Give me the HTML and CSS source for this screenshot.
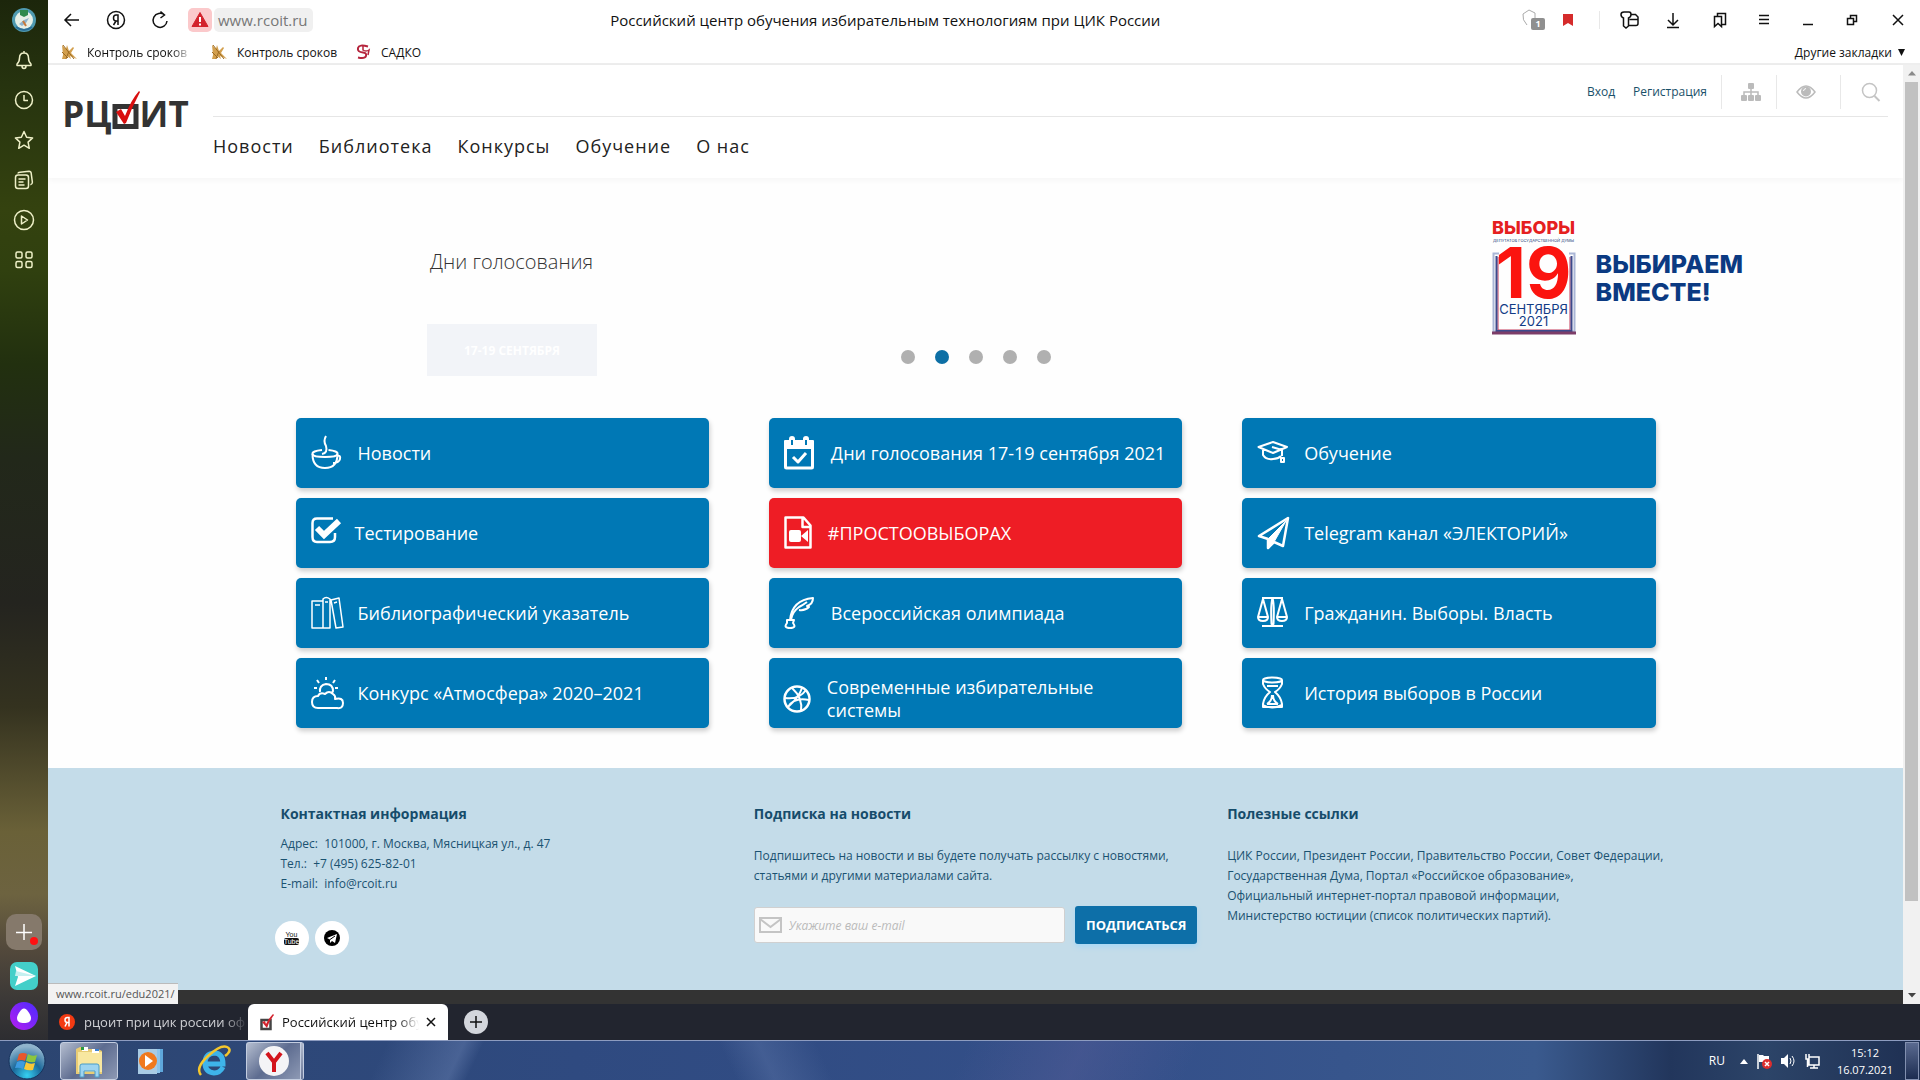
FILE: index.html
```html
<!DOCTYPE html>
<html lang="ru">
<head>
<meta charset="utf-8">
<title>Российский центр обучения избирательным технологиям при ЦИК России</title>
<link rel="stylesheet" href="styles.css">
</head>
<body>
<div class="desktop">
  <div class="browser">
    <aside class="sidebar">
      <div class="side-group">
        <button class="side-btn" aria-label="Профиль"><svg width="26" height="26" viewBox="0 0 26 26"><circle cx="13" cy="13" r="12" fill="#4f9ab0"/><circle cx="13" cy="13" r="9" fill="#e6efe6"/><path d="M9 3h8v5l-4 2-4-2z" fill="#2f8a4c"/><path d="M8 17l5-4 5-2-3 5-4 3z" fill="#8fb4cc"/><path d="M12 14l3 5" stroke="#c77a3a" stroke-width="2"/><path d="M5 20q8 6 16 0" stroke="#2b6f97" stroke-width="2" fill="none"/></svg></button>
        <button class="side-btn" aria-label="Уведомления"><svg class="side-icon" width="20" height="20" viewBox="0 0 20 20"><path d="M3 15.500V14q2.500-2 2.500-6 0-5 4.500-5t4.500 5q0 4 2.500 6v1.500zM8 16q0 2.500 2 2.500t2-2.500M10 3V1"/></svg></button>
        <button class="side-btn" aria-label="История"><svg class="side-icon" width="20" height="20" viewBox="0 0 20 20"><circle cx="10" cy="10" r="8.500"/><path d="M10 5v5.500h4"/></svg></button>
        <button class="side-btn" aria-label="Избранное"><svg class="side-icon" width="20" height="20" viewBox="0 0 20 20"><path d="M10 1.500l2.600 5.700 6 .7-4.500 4.200 1.200 6.200-5.300-3.100-5.300 3.100 1.200-6.200L1.400 7.900l6-.7z"/></svg></button>
        <button class="side-btn" aria-label="Коллекции"><svg class="side-icon" width="20" height="20" viewBox="0 0 20 20"><rect x="1.500" y="5" width="13" height="13.500" rx="2.500"/><path d="M4 3.500q0-1 2-1.200l9-1q2 0 2.200 2l1.200 9q0 2-2 2.500M4.500 9h7M4.500 12h5M4.500 15h6"/></svg></button>
        <button class="side-btn" aria-label="Видео"><svg class="side-icon" width="22" height="22" viewBox="0 0 22 22"><circle cx="11" cy="11" r="9.500"/><path d="M8.500 7v8l6-4z"/></svg></button>
        <button class="side-btn" aria-label="Сервисы"><svg class="side-icon" width="20" height="20" viewBox="0 0 20 20"><rect x="2" y="2" width="6" height="6" rx="1.500"/><rect x="12" y="2" width="6" height="6" rx="1.500"/><rect x="2" y="11.500" width="6" height="6" rx="1.500"/><rect x="12" y="11.500" width="6" height="6" rx="1.500"/></svg></button>
      </div>
      <div class="side-group side-bottom">
        <button class="side-btn side-add" aria-label="Добавить"><svg width="36" height="36" viewBox="0 0 36 36"><path d="M10 18.500h16M18 10v16" stroke="#fff" stroke-width="1.500"/><circle cx="28" cy="27" r="4" fill="#f11"/></svg></button>
        <button class="side-btn" aria-label="Мессенджер"><svg width="28" height="28" viewBox="0 0 28 28"><rect width="28" height="28" rx="7" fill="#43cfc9"/><path d="M5 4l21 10L5 24l3-9z" fill="#fff"/><path d="M5 14h21L6 9z" fill="#c4f0f0"/></svg></button>
        <button class="side-btn" aria-label="Алиса"><svg width="28" height="28" viewBox="0 0 28 28"><defs><linearGradient id="alice" x1="0" y1="1" x2="1" y2="0"><stop offset="0" stop-color="#b61df0"/><stop offset="1" stop-color="#4a2cff"/></linearGradient></defs><circle cx="14" cy="14" r="14" fill="url(#alice)"/><path d="M14 6.500c3 0 7 6.500 7 9.500 0 4-3 5-7 5s-7-1-7-5c0-3 4-9.500 7-9.500z" fill="#fff"/></svg></button>
      </div>
    </aside>

    <div class="window">
      <div class="toolbar">
        <div class="nav-tools">
          <button class="tool" aria-label="Назад"><svg class="ink" width="20" height="20" viewBox="0 0 20 20"><path d="M17 10H3M9 4l-6 6 6 6"/></svg></button>
          <button class="tool" aria-label="Яндекс"><svg class="ink" width="20" height="20" viewBox="0 0 20 20"><circle cx="10" cy="10" r="8.500"/><path d="M12 15V5h-2q-2.500 0-2.500 3T10 11h2M10 11l-2.500 4"/></svg></button>
          <button class="tool" aria-label="Обновить"><svg class="ink" width="20" height="20" viewBox="0 0 20 20"><path d="M14.500 5A7 7 0 1 0 17 11M10.500 1.500L14.500 5l-4 3"/></svg></button>
          <span class="warning"><svg width="18" height="18" viewBox="0 0 18 18"><path d="M9 1.500l8 14H1z" fill="#d3222c" stroke="#d3222c" stroke-linejoin="round"/><path d="M9 6v5M9 12.500v2" stroke="#fff" stroke-width="2"/></svg></span>
          <a class="address" href="#">www.rcoit.ru</a>
        </div>
        <div class="window-title">Российский центр обучения избирательным технологиям при ЦИК России</div>
        <div class="window-tools">
          <button class="tool-small tool-shield" aria-label="Защита"><svg width="24" height="24" viewBox="0 0 24 24"><path d="M5 17Q0 12 1 6l6-4 6 3v5" fill="none" stroke="#aaa"/></svg><span class="tool-count">1</span></button>
          <button class="tool-small" aria-label="Закладка"><svg width="12" height="16" viewBox="0 0 12 16"><path d="M1 2h10v12l-5-3-5 3z" fill="#d52b2b"/></svg></button>
          <span class="tool-divider"></span>
          <button class="tool" aria-label="Пароли"><svg class="ink" width="20" height="20" viewBox="0 0 20 20"><path d="M1.500 8Q-1 7-1 4.500T2 2h5Q9 2 9 4.500T6.500 8v8L4 18l-2.500-2zM9 4.500h4.500L16 7v6.500q0 2-2 2H7M7.500 9.500H16"/></svg></button>
          <button class="tool" aria-label="Загрузки"><svg class="ink" width="20" height="20" viewBox="0 0 20 20"><path d="M7 3v12M2 10l5 5 5-5M1 17.500h12"/></svg></button>
          <button class="tool" aria-label="Закладки"><svg class="ink" width="20" height="20" viewBox="0 0 20 20"><path d="M4.500 6.500h7v10l-3.500-3-3.500 3zM7.500 6.500v-3h8v11h-3.500"/></svg></button>
          <button class="tool" aria-label="Меню"><svg class="ink" width="20" height="20" viewBox="0 0 20 20"><path d="M5 5.500h10M5 9.500h10M5 13.500h10"/></svg></button>
          <button class="tool" aria-label="Свернуть"><svg class="ink" width="20" height="20" viewBox="0 0 20 20"><path d="M5 14.500h10"/></svg></button>
          <button class="tool" aria-label="Восстановить"><svg class="ink" width="20" height="20" viewBox="0 0 20 20"><path d="M5.500 8.500h6v6h-6zM8.500 8.500v-3h6v6h-3"/></svg></button>
          <button class="tool tool-close" aria-label="Закрыть"><svg class="ink" width="20" height="20" viewBox="0 0 20 20"><path d="M5 5l10 10M15 5L5 15"/></svg></button>
        </div>
      </div>

      <nav class="bookmarks">
        <a class="bookmark" href="#"><svg width="16" height="16" viewBox="0 0 16 16"><path d="M1 1l4 4 1-4 2 6 4-4 1 1-3 5 6 6-7-3 1 3-4-3-1 3H1l1-4z" fill="#d3a04e"/><path d="M2 1l11 14M1 8l6 6M8 7l-3 8" fill="none" stroke="#9c6a22"/></svg><span class="bookmark-cut">Контроль сроков</span></a>
        <a class="bookmark" href="#"><svg width="16" height="16" viewBox="0 0 16 16"><path d="M1 1l4 4 1-4 2 6 4-4 1 1-3 5 6 6-7-3 1 3-4-3-1 3H1l1-4z" fill="#d3a04e"/><path d="M2 1l11 14M1 8l6 6M8 7l-3 8" fill="none" stroke="#9c6a22"/></svg><span>Контроль сроков</span></a>
        <a class="bookmark" href="#"><svg width="16" height="16" viewBox="0 0 16 16"><path d="M13 2.500Q4 0 3 4t5 4.500q4 .5 3 3.500T3 13.500" fill="none" stroke="#b5243c" stroke-width="2"/><path d="M8 2v4q3 2 6 0l-1 5" fill="none" stroke="#b5243c" stroke-width="1.500"/></svg><span>САДКО</span></a>
        <button class="other-bookmarks">Другие закладки <svg width="7" height="7" viewBox="0 0 7 7"><path d="M0 0h7L3.500 7z" fill="#111"/></svg></button>
      </nav>

      <div class="viewport">
        <div class="page">
          <header class="site-header">
            <a class="logo" href="#"><span>РЦ</span><svg width="28" height="48" viewBox="0 0 28 48"><path d="M3 16.500h21v20H3z" fill="none" stroke="#333" stroke-width="5"/><path d="M4 22l5-3 4 7Q19 10 27 1l1 1Q20 17 14 33l-2 1z" fill="#d90f0f"/></svg><span>ИТ</span></a>
            <div class="header-main">
              <div class="header-top">
                <a class="auth-link" href="#">Вход</a>
                <a class="auth-link" href="#">Регистрация</a>
                <button class="header-btn header-map" aria-label="Карта сайта"><svg width="20" height="20" viewBox="0 0 20 20" fill="#bbb"><rect x="7" y="1" width="6" height="6" rx="1"/><rect x="0" y="13" width="6" height="6" rx="1"/><rect x="7" y="13" width="6" height="6" rx="1"/><rect x="14" y="13" width="6" height="6" rx="1"/><path d="M3 13v-3h14v3M10 7v6" fill="none" stroke="#bbb" stroke-width="1.500"/></svg></button>
                <button class="header-btn header-eye" aria-label="Версия для слабовидящих"><svg width="20" height="20" viewBox="0 0 20 20"><path d="M1 10q9-12 18 0-9 12-18 0z" fill="none" stroke="#bbb" stroke-width="1.500"/><circle cx="10" cy="9.500" r="5" fill="#bbb"/><path d="M7.500 9Q7.500 7 10 6.500" fill="none" stroke="#fff"/></svg></button>
                <button class="header-btn header-search" aria-label="Поиск"><svg width="20" height="20" viewBox="0 0 20 20"><circle cx="8.500" cy="8.500" r="7" fill="none" stroke="#c4c4c4" stroke-width="1.500"/><path d="M13.500 14l5 5" stroke="#c4c4c4" stroke-width="2"/></svg></button>
              </div>
              <nav class="site-nav"><a href="#">Новости</a><a href="#">Библиотека</a><a href="#">Конкурсы</a><a href="#">Обучение</a><a href="#">О нас</a></nav>
            </div>
          </header>

          <section class="hero">
            <div class="hero-copy"><h1>Дни голосования</h1><button class="hero-btn">17-19 СЕНТЯБРЯ</button></div>
            <div class="dots">
              <button class="dot" aria-label="Слайд 1"></button><button class="dot dot-active" aria-label="Слайд 2"></button><button class="dot" aria-label="Слайд 3"></button><button class="dot" aria-label="Слайд 4"></button><button class="dot" aria-label="Слайд 5"></button>
            </div>
            <div class="campaign">
              <div class="poster">
                <strong class="poster-head">ВЫБОРЫ</strong>
                <small class="poster-sub">ДЕПУТАТОВ ГОСУДАРСТВЕННОЙ ДУМЫ</small>
                <strong class="poster-day">19</strong>
                <span class="poster-date">СЕНТЯБРЯ</span>
                <span class="poster-date">2021</span>
                <svg class="poster-frame" width="84" height="83" viewBox="0 0 84 83"><path d="M7 1.500H1.500v78h81v-78H77" fill="none" stroke="#aab6d6" stroke-width="2"/><path d="M6 5v73h72V5" fill="none" stroke="#c43a5a"/><path d="M4.500 4v75h75V4" fill="none" stroke="#3c4a8c" stroke-width="2"/><path d="M0 81h84" stroke="#7c3d68" stroke-width="3"/></svg>
              </div>
              <p class="slogan">ВЫБИРАЕМ<br>ВМЕСТЕ!</p>
            </div>
          </section>

          <main class="tiles">
            <a class="tile" href="#"><svg class="glyph" width="34" height="34" viewBox="0 0 34 34"><path d="M11 14Q1 15 1.500 18t12.500 3 12.500-3-9-4"/><path d="M1.500 18q0 14 12.500 14t12.500-14M26 20q4-1 3 3t-7 4M11 18q6-1 4-8-3-5 0-10"/></svg><span>Новости</span></a>
            <a class="tile" href="#"><svg class="glyph" width="34" height="34" viewBox="0 0 34 34"><rect x="1.500" y="6" width="27" height="26" rx="1" stroke-width="3"/><path d="M1 5h28v7H1z" fill="#fff"/><path d="M8 3v6M22 3v6" stroke="#fff" stroke-width="6" stroke-linecap="round"/><path d="M8 4v5M22 4v5" stroke="#0078b5" stroke-width="2"/><path d="M9 21l5 5 8-9" stroke-width="3"/></svg><span>Дни голосования 17-19 сентября 2021</span></a>
            <a class="tile" href="#"><svg class="glyph" width="34" height="34" viewBox="0 0 34 34"><path d="M1.500 11L16 6l14 5-14 6zM6 13v6q3 5 10 4 5 0 8-3M15 11l10 3v6M24 26v-4h3v4z"/></svg><span>Обучение</span></a>
            <a class="tile tile-wide-icon" href="#"><svg class="glyph" width="34" height="34" viewBox="0 0 34 34"><path d="M22 2.500H6Q1.500 2.500 1.500 7v14q0 5 4.500 5h13q5 0 5-5v-4" stroke-width="2.500"/><path d="M6 12l7 7L28 5" stroke-width="6" stroke-linejoin="miter"/></svg><span>Тестирование</span></a>
            <a class="tile tile-alert tile-wide-icon" href="#"><svg class="glyph" width="34" height="34" viewBox="0 0 34 34"><path d="M1.500 1.500h18l7 8v22h-25zM18.500 2v9H27" stroke-width="2.500"/><rect x="5" y="14" width="12" height="12" rx="2" fill="#fff" stroke="none"/><path d="M17 20l7-6v12z" fill="#fff" stroke="none"/></svg><span>#ПРОСТООВЫБОРАХ</span></a>
            <a class="tile" href="#"><svg class="glyph" width="34" height="34" viewBox="0 0 34 34"><path d="M2 20L31 2l-5 28-9-4-6 6V23z" stroke-width="2.500"/><path d="M11 23L29 5 17 26l-6 6z" fill="#fff" stroke-width="1"/></svg><span>Telegram канал «ЭЛЕКТОРИЙ»</span></a>
            <a class="tile" href="#"><svg class="glyph" width="34" height="34" viewBox="0 0 34 34"><path d="M1 5h11v27H1zM12 3q3-3 7 0v29h-7zM20 4l8-2 4 29-7 1zM4 9h5M14 6h3M23 7l3-1" stroke-width="1.500"/></svg><span>Библиографический указатель</span></a>
            <a class="tile" href="#"><svg class="glyph" width="34" height="34" viewBox="0 0 34 34"><path d="M6 24Q8 4 29 2q0 6-6 8l2 1q-4 4-10 3M7 24q1-8 8-13 4-2 8-5M3 24h7l-1 3q4 5-3 5t-3-5z"/></svg><span>Всероссийская олимпиада</span></a>
            <a class="tile" href="#"><svg class="glyph" width="34" height="34" viewBox="0 0 34 34"><path d="M5 2h21M6 3L1 21q0 4 5 4t5-4zM25 3l-5 18q0 4 5 4t5-4zM1 21h10M20 21h10M15.500 2q-2 6-1 26h2q1-20-1-26zM5 30h21"/></svg><span>Гражданин. Выборы. Власть</span></a>
            <a class="tile" href="#"><svg class="glyph" width="34" height="34" viewBox="0 0 34 34"><path d="M7 32q-6 0-6-6t6-6q2-4 7-2 4-4 8 0 3 2 2 5 8-2 8 4t-6 5zM9 16q-1-7 6-8 7 0 7 7l-1 2M15 4V1M8 7L6 4M22 7l2-3M6 12H3M27 12h-3"/></svg><span>Конкурс «Атмосфера» 2020–2021</span></a>
            <a class="tile tile-tall tile-wide-icon" href="#"><svg class="glyph" width="34" height="34" viewBox="0 0 34 34"><circle cx="14" cy="17" r="12.500" stroke-width="2.500"/><path d="M2 16q14 2 21-8M9 6q11 10 9 23M5 25q6-10 21-7M19 6q-3 9-13 18" stroke-width="2"/></svg><span>Современные избирательные системы</span></a>
            <a class="tile" href="#"><svg class="glyph" width="34" height="34" viewBox="0 0 34 34"><ellipse cx="15.500" cy="4" rx="9.500" ry="2.500"/><path d="M6 4v4q2 5 7 8-6 5-7 12v3h19v-3q-1-7-7-12 5-3 7-8V4M6 29q9 5 19 0M10 28q5-3 5-9M21 28q-5-3-5-9M10 28h11M10 10h11"/></svg><span>История выборов в России</span></a>
          </main>

          <footer class="site-footer">
            <section class="footer-col">
              <h2>Контактная информация</h2>
              <address>Адрес:&nbsp; 101000, г. Москва, Мясницкая ул., д. 47<br>Тел.:&nbsp; +7 (495) 625-82-01<br>E-mail:&nbsp; <a href="#">info@rcoit.ru</a></address>
              <div class="social">
                <a class="social-link" href="#" aria-label="YouTube"><span class="yt">You</span><span class="yt yt-tube">Tube</span></a>
                <a class="social-link" href="#" aria-label="Telegram"><svg width="16" height="16" viewBox="0 0 16 16"><circle cx="8" cy="8" r="8" fill="#000"/><path d="M3 8l10-4-2 9-3-2-2 2V9.500z" fill="#fff"/><path d="M6 9.500L11 6" stroke="#000"/></svg></a>
              </div>
            </section>
            <section class="footer-col">
              <h2>Подписка на новости</h2>
              <p>Подпишитесь на новости и вы будете получать рассылку с новостями, статьями и другими материалами сайта.</p>
              <form class="subscribe">
                <label class="email-box"><svg width="24" height="18" viewBox="0 0 24 18"><path d="M1 2h21v14H1zM1 3l10.500 8L22 3" fill="none" stroke="#c4c4c4" stroke-width="2"/></svg><input type="email" placeholder="Укажите ваш e-mail" aria-label="Укажите ваш e-mail"></label>
                <button class="subscribe-btn" type="button">ПОДПИСАТЬСЯ</button>
              </form>
            </section>
            <section class="footer-col">
              <h2>Полезные ссылки</h2>
              <p><a href="#">ЦИК России</a>, <a href="#">Президент России</a>, <a href="#">Правительство России</a>, <a href="#">Совет Федерации</a>, <a href="#">Государственная Дума</a>, <a href="#">Портал «Российское образование»</a>,<br><a href="#">Официальный интернет-портал правовой информации</a>,<br><a href="#">Министерство юстиции (список политических партий)</a>.</p>
            </section>
          </footer>
          <div class="footer-strip"></div>
        </div>
        <div class="scrollbar" aria-hidden="true">
          <svg width="17" height="17" viewBox="0 0 17 17"><path d="M5 10.500h8L9 6z" fill="#8a8a8a"/></svg>
          <div class="scroll-thumb"></div>
          <div class="scroll-rest"></div>
          <svg width="17" height="17" viewBox="0 0 17 17"><path d="M5 6h8l-4 4.500z" fill="#444"/></svg>
        </div>
        <div class="status">www.rcoit.ru/edu2021/</div>
      </div>

      <div class="tabs">
        <button class="tab tab-idle"><svg width="16" height="16" viewBox="0 0 16 16"><circle cx="8" cy="8" r="8" fill="#f33a12"/><path d="M10 12.500v-9H8.500Q6 3.500 6 6t2.500 2.500H10M8 8.500l-2 4" fill="none" stroke="#fff" stroke-width="1.500"/></svg><span class="tab-label">рцоит при цик россии оф</span></button>
        <div class="tab tab-active"><svg width="16" height="18" viewBox="0 0 16 18"><path d="M2.500 7h9v9h-9z" fill="none" stroke="#444" stroke-width="2.500"/><path d="M3 9l3-1 1 3q3-6 7-10l1 1q-5 6-7 13z" fill="#d3222c"/></svg><span class="tab-label">Российский центр обу</span><button class="tab-close" aria-label="Закрыть вкладку"><svg class="ink" width="10" height="10" viewBox="0 0 10 10"><path d="M1 1l8 8M9 1L1 9"/></svg></button></div>
        <button class="tab-add" aria-label="Новая вкладка"><svg class="ink" width="24" height="24" viewBox="0 0 24 24"><path d="M6 12h12M12 6v12"/></svg></button>
      </div>
    </div>
  </div>

  <div class="taskbar">
    <button class="start" aria-label="Пуск"><svg width="38" height="38" viewBox="0 0 38 38"><defs><radialGradient id="orb" cx=".5" cy=".9" r=".8"><stop offset="0" stop-color="#35d0f2"/><stop offset=".5" stop-color="#1b6a9c"/><stop offset="1" stop-color="#8fb3cc"/></radialGradient></defs><circle cx="19" cy="19" r="18" fill="url(#orb)" stroke="#16325c"/><path d="M11 12q4-2 8 0l-2 7q-4-2-8 0z" fill="#e8572a"/><path d="M20 12q4 3 9 1l-2 7q-4 1-9-1z" fill="#8cc63e"/><path d="M9 20q4-2 8 0l-2 7q-4-2-8-1z" fill="#3d9be0"/><path d="M18 20q4 3 9 1l-2 7q-5 1-9-1z" fill="#f9c838"/></svg></button>
    <button class="task task-open" aria-label="Проводник"><svg width="34" height="34" viewBox="0 0 34 34"><path d="M4 5l4-2h6l2 2h10l4 2v23H4z" fill="#e8cc74"/><path d="M6 8h24v20H6z" fill="#f8e7a0"/><path d="M10 3h6v4h-6zM20 5h7v4h-7z" fill="#fff"/><path d="M9 3h3v3H9z" fill="#2a9a3c"/><path d="M23 5h4v2h-4z" fill="#3a7fd0"/><path d="M8 33V22q0-2 2-2h15q2 0 2 2v11h-4v-6H12v6z" fill="#9dd4f0" stroke="#4a9cc8"/></svg></button>
    <button class="task" aria-label="Проигрыватель"><svg width="30" height="30" viewBox="0 0 30 30"><path d="M9 3h18v23H9z" fill="#5fa8dc"/><path d="M6 3h18v24H6z" fill="#8cc4ec"/><path d="M2 3h19v25H2z" fill="#a9cbe4"/><circle cx="12" cy="15" r="9" fill="#f0791e"/><path d="M9 9l8 6-8 6z" fill="#fff"/></svg></button>
    <button class="task" aria-label="Internet Explorer"><svg width="34" height="34" viewBox="0 0 34 34"><path d="M27 23q-3 6-9 6-9-1-9-10t9-10q9 0 9 11H11" fill="none" stroke="#3eb4ea" stroke-width="5"/><path d="M5 31Q-1 24 12 12T31 3t-2 9" fill="none" stroke="#f4c62c" stroke-width="2.500"/></svg></button>
    <button class="task task-open task-stacked" aria-label="Яндекс Браузер"><svg width="30" height="30" viewBox="0 0 30 30"><circle cx="15" cy="15" r="15" fill="#f4f4f6"/><path d="M8 7l7 9 7-9M15 15v11" fill="none" stroke="#d3141c" stroke-width="4"/></svg></button>
    <div class="tray">
      <span class="lang">RU</span>
      <svg width="10" height="10" viewBox="0 0 10 10"><path d="M1 8h8L5 3z" fill="#fff"/></svg>
      <svg width="18" height="18" viewBox="0 0 18 18"><path d="M3 2v15" stroke="#fff" stroke-width="1.500"/><path d="M4 3h4l1 1h5v6H4z" fill="#fff"/><circle cx="12" cy="12" r="5" fill="#dc2e2e"/><path d="M10 10l4 4M14 10l-4 4" stroke="#fff" stroke-width="1.500"/></svg>
      <svg width="18" height="18" viewBox="0 0 18 18"><path d="M2 6h3l4-4v14l-4-4H2z" fill="#fff"/><path d="M11 6q2 3 0 6M13 4q4 5 0 10" fill="none" stroke="#fff"/></svg>
      <svg width="18" height="18" viewBox="0 0 18 18"><path d="M6 5h10v8H6zM11 13v3M7 16h8M3 2v5h3V2M4.500 7v8" fill="none" stroke="#fff" stroke-width="1.500"/></svg>
      <time class="clock">15:12<br>16.07.2021</time>
      <button class="show-desktop" aria-label="Показать рабочий стол"></button>
    </div>
  </div>
</div>
</body>
</html>
```

FILE: styles.css
```css
* { box-sizing: border-box; }
body { margin: 0; font-family: "Open Sans", "Noto Sans", sans-serif; font-size: 12px; color: #111; }
button { padding: 0; border: 0; background: none; font: inherit; color: inherit; cursor: pointer; }
a { color: inherit; text-decoration: none; }
svg { display: block; flex: none; overflow: visible; }
h1, h2, p { margin: 0; }

.desktop { display: flex; flex-direction: column; min-height: 100vh; }
.browser { display: flex; flex: 1; }

/* Sidebar */
.sidebar { display: flex; flex-direction: column; flex: none; width: 48px; justify-content: space-between; background: linear-gradient(#1c260b 0%, #26330f 8%, #34420f 20%, #30400f 26%, #22300f 35%, #22281a 44%, #24241f 58%, #34321f 68%, #6a6138 80%, #6d6340 86%, #544a3c 91%, #3c3937 96%, #2d2d31 100%); }
.side-group { display: flex; flex-direction: column; align-items: center; }
.side-btn { display: grid; place-items: center; width: 40px; height: 40px; }
.side-bottom { padding-bottom: 4px; }
.side-add { width: 36px; height: 36px; border-radius: 10px; background: #85796b; margin-bottom: 6px; }
.side-icon { fill: none; stroke: #eef0c8; stroke-width: 1.5; stroke-linejoin: round; }
.ink { fill: none; stroke: #111; stroke-width: 1.5; }

/* Browser chrome */
.window { display: flex; flex-direction: column; flex: 1; min-width: 0; background: #fff; }
.toolbar { display: flex; align-items: center; height: 40px; padding-left: 2px; }
.nav-tools, .window-tools { display: flex; align-items: center; }
.tool { display: grid; place-items: center; width: 44px; height: 40px; }
.tool-close { margin-left: 2px; }
.warning { display: grid; place-items: center; width: 24px; height: 24px; margin: 0 2px 0 6px; border-radius: 5px; background: #fbc9cb; }
.address { padding: 0 5px 0 4px; border-radius: 5px; background: #f0f0f0; font-size: 15px; line-height: 24px; color: #777; }
.window-title { flex: 1; font-size: 15px; text-align: center; white-space: nowrap; overflow: hidden; }
.window-tools { min-width: 462px; justify-content: flex-end; }
.tool-small { display: grid; place-items: center; width: 34px; height: 40px; }
.tool-shield { position: relative; }
.tool-count { position: absolute; left: 14px; top: 18px; width: 14px; border-radius: 2px; background: #8f8f8f; color: #fff; font-size: 9px; font-weight: 700; line-height: 12px; }
.tool-divider { width: 1px; height: 18px; margin: 0 10px 0 14px; background: #e8e8e8; }
.bookmarks { display: flex; align-items: center; gap: 18px; height: 25px; padding: 1px 15px 0 13px; border-bottom: 2px solid #eee; }
.bookmark { display: flex; align-items: center; gap: 10px; }
.bookmark-cut { width: 106px; overflow: hidden; white-space: nowrap; -webkit-mask-image: linear-gradient(90deg, #000 80%, transparent); mask-image: linear-gradient(90deg, #000 80%, transparent); }
.other-bookmarks { display: flex; align-items: center; gap: 6px; margin-left: auto; }

.viewport { position: relative; display: flex; flex: 1; }
.page { display: flex; flex-direction: column; flex: 1; min-width: 0; background: #fefefe; }
.scrollbar { display: flex; flex-direction: column; width: 17px; background: #f1f1f1; }
.scroll-thumb { flex: 820; margin: 0 2px; background: #c1c1c1; }
.scroll-rest { flex: 86; }
.status { position: absolute; left: 0; bottom: 0; padding: 0 3px 0 8px; border-top: 1px solid #bbb; background: #f2f2f2; font-size: 11px; line-height: 20px; color: #555; }

/* Site header */
.site-header { display: flex; gap: 25px; height: 113px; padding: 0 15px; background: #fff; box-shadow: 0 2px 6px #0000000a; }
.logo { display: flex; align-items: center; justify-content: center; width: 125px; height: 48px; margin-top: 25px; font-size: 35px; font-weight: 700; line-height: 48px; color: #333; }
.header-main { flex: 1; }
.header-top { display: flex; align-items: center; justify-content: flex-end; height: 52px; padding-top: 2px; border-bottom: 1px solid #e6e6e6; line-height: 16px; color: #1a5069; }
.auth-link { margin-right: 18px; }
.auth-link + .header-btn { margin-left: -4px; }
.header-btn { display: grid; place-items: center; height: 34px; border-left: 1px solid #e8e8e8; }
.header-map { width: 55px; padding-left: 4px; }
.header-eye { width: 64px; padding-right: 6px; }
.header-search { width: 48px; padding-left: 12px; }
.site-nav { display: flex; gap: 25px; padding-top: 16px; font-size: 18px; line-height: 26px; letter-spacing: 1px; color: #222; }

/* Slider */
.hero { display: grid; grid-template-columns: 1fr auto 1fr; height: 240px; padding-top: 40px; }
.hero-copy { padding-left: 379px; padding-top: 30px; }
.hero h1 { padding-left: 3px; font-size: 20px; font-weight: 300; line-height: 28px; color: #333; }
.hero-btn { width: 170px; height: 52px; margin-top: 48px; background: #f2f4f8; color: #fff; font-weight: 700; }
.dots { display: flex; gap: 20px; padding-top: 132px; }
.dot { width: 14px; height: 14px; border-radius: 50%; background: #b0b0b0; }
.dot-active { background: #0d6fa5; }
.campaign { position: relative; z-index: 0; display: flex; justify-content: flex-end; gap: 20px; padding-right: 160px; font-family: Inter, sans-serif; }
.poster { position: relative; display: flex; flex-direction: column; align-items: center; width: 84px; height: 118px; text-align: center; }
.poster-head { font-size: 18px; font-weight: 800; line-height: 20px; color: #e5201f; }
.poster-sub { font-size: 4px; line-height: 5px; white-space: nowrap; color: #1b3f7c; }
.poster-day { font-size: 70px; line-height: 60px; color: #fb140f; }
.poster-date { font-size: 13px; line-height: 12px; color: #123c86; }
.poster-frame { position: absolute; left: 0; top: 34px; z-index: -1; }
.slogan { padding-top: 32px; font-size: 25px; font-weight: 800; line-height: 28px; color: #0b3a82; }

/* Tiles */
.tiles { display: grid; grid-template-columns: repeat(3, 1fr); gap: 10px 60px; width: 100%; max-width: 1420px; margin: 0 auto 40px; padding: 0 30px; }
.tile { display: flex; align-items: center; gap: 13px; height: 70px; padding-left: 15px; border-radius: 5px; background: #0078b5; box-shadow: 1px 3px 5px #00000033; font-size: 18px; line-height: 23px; color: #fff; }
.tile-wide-icon { gap: 10px; }
.tile-alert { background: #ee1d25; }
.tile-tall { padding: 12px 30px 0 14px; }
.glyph { fill: none; stroke: #fff; stroke-width: 2; stroke-linejoin: round; }

/* Footer */
.site-footer { display: grid; grid-template-columns: repeat(3, 1fr); height: 222px; padding: 36px calc((100% - 1420px) / 2) 0; background: #c4dce9; line-height: 20px; color: #1a5271; }
.footer-col { padding: 0 15px; }
.footer-col h2 { font-size: 14px; line-height: 20px; color: #164c6b; }
.footer-col address { margin-top: 10px; font-style: normal; }
.footer-col p { margin-top: 22px; }
.social { display: flex; gap: 6px; margin: 27px 0 0 -6px; }
.social-link { display: flex; flex-direction: column; align-items: center; justify-content: center; width: 34px; height: 34px; border-radius: 50%; background: #fff; color: #111; }
.yt { font-family: "Liberation Sans", sans-serif; font-size: 7px; line-height: 7px; }
.yt-tube { border-radius: 2px; background: #111; color: #fff; }
.subscribe { display: flex; align-items: center; gap: 10px; margin-top: 20px; }
.email-box { display: flex; align-items: center; gap: 6px; flex: 0 1 312px; height: 36px; padding: 0 4px; border: 1px solid #d0d0d0; border-radius: 3px; background: #f9f9f9; }
.email-box input { flex: 1; min-width: 0; border: 0; outline: 0; padding: 0; background: none; font: italic 12px "Open Sans", sans-serif; }
.email-box input::placeholder { color: #bbb; }
.subscribe-btn { width: 122px; height: 38px; border-radius: 3px; background: #0d6fa8; box-shadow: 0 3px 5px #a9d8f5; color: #fff; font-size: 13px; font-weight: 700; }
.footer-strip { flex: 1; min-height: 14px; background: #333; }

/* Tabs */
.tabs { display: flex; align-items: center; height: 36px; background: #22252f; }
.tab { display: flex; align-items: center; gap: 9px; width: 200px; height: 36px; padding: 0 12px 0 11px; }
.tab-idle { padding-right: 0; color: #cfd0d4; }
.tab-active { gap: 7px; border-radius: 6px 6px 0 0; background: #fff; }
.tab-label { flex: 1; overflow: hidden; white-space: nowrap; text-align: left; font-size: 13px; -webkit-mask-image: linear-gradient(90deg, #000 85%, transparent); mask-image: linear-gradient(90deg, #000 85%, transparent); }
.tab-add { width: 24px; height: 24px; margin-left: 16px; border-radius: 50%; background: #d3d6dc; }

/* Taskbar */
.taskbar { display: flex; align-items: center; gap: 4px; height: 40px; padding-left: 8px; border-top: 1px solid #8d9cc0; background: linear-gradient(65deg, transparent 38%, #5f78ab66 40%, transparent 43%), linear-gradient(115deg, transparent 20%, #7088b866 24%, transparent 25%, transparent 50%, #5b5f9a66 56%, transparent 62%), linear-gradient(90deg, #2c4570 0%, #2f4a80 30%, #34508a 60%, #3a5a8e 80%, #22365c 87%, #2c4468 92%, #1e2f52 100%); color: #fff; }
.start { margin-right: 10px; }
.task { display: grid; place-items: center; width: 58px; height: 38px; border-radius: 3px; }
.task-open { border: 1px solid #c3cde0; background: linear-gradient(135deg, #b4bdcf, #5d6c90 50%, #8d99b4); }
.task-stacked { border-right: 4px double #c3cde0; }
.tray { display: flex; align-items: center; gap: 6px; height: 100%; margin-left: auto; }
.lang { margin-right: 8px; }
.clock { margin: 0 6px 0 10px; font-size: 11px; line-height: 17px; text-align: center; }
.show-desktop { width: 14px; height: 38px; margin-right: 1px; border: 1px solid #8290b0; background: linear-gradient(#5a6a90, #1c2c50); }
```
